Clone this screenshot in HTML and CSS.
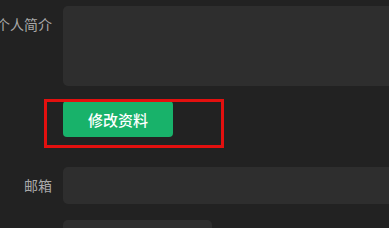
FILE: index.html
```html
<!DOCTYPE html>
<html lang="zh-CN">

<head>
    <meta charset="UTF-8">
    <meta name="viewport" content="width=device-width, initial-scale=1.0">
    <title>个人资料</title>
    <link rel="stylesheet" href="styles.css">
</head>

<body>
    <div class="form">
        <div class="form_item">
            <label class="form_label">个人简介</label>
            <div class="form_field">
                <textarea class="textarea"></textarea>
            </div>
        </div>
        <div class="form_item btn_row">
            <div class="form_label"></div>
            <div class="form_field">
                <button class="btn_green">修改资料</button>
            </div>
            <div class="mark"></div>
        </div>
        <div class="form_item mail_row">
            <label class="form_label">邮箱</label>
            <div class="form_field">
                <input class="input" type="text">
            </div>
        </div>
        <div class="form_item short_row">
            <div class="form_label"></div>
            <div class="form_field">
                <input class="input input_short" type="text">
            </div>
        </div>
    </div>
</body>

</html>
```

FILE: styles.css
```css
* {
    margin: 0;
    padding: 0;
    box-sizing: border-box;
}

body {
    background: #222222;
    font-family: "Noto Sans CJK SC", "Noto Sans", sans-serif;
    font-size: 14px;
    overflow: hidden;
}

.form {
    padding-top: 6px;
}

.form_item {
    display: flex;
    align-items: flex-start;
}

.form_label {
    width: 52px;
    flex-shrink: 0;
    margin-right: 11px;
    display: flex;
    justify-content: flex-end;
    white-space: nowrap;
    line-height: 36px;
    color: #a9a9a9;
}

.form_field {
    flex: 1;
}

.textarea {
    display: block;
    width: 340px;
    height: 80px;
    border: none;
    border-radius: 5px;
    background: #2e2e2e;
    resize: none;
    outline: none;
}

.input {
    display: block;
    width: 340px;
    height: 37px;
    border: none;
    border-radius: 5px;
    background: #2e2e2e;
    outline: none;
}

.input_short {
    width: 149px;
}

.btn_row {
    position: relative;
    margin-top: 15px;
}

.btn_green {
    width: 110px;
    height: 36px;
    border: none;
    border-radius: 4px;
    background: #18b26a;
    color: #ffffff;
    font-family: inherit;
    font-size: 15px;
    font-weight: 500;
}

.mark {
    position: absolute;
    left: 44px;
    top: -2px;
    width: 180px;
    height: 49px;
    border: 3px solid #e3100f;
}

.mail_row {
    margin-top: 30px;
}

.short_row {
    margin-top: 16px;
}
```
